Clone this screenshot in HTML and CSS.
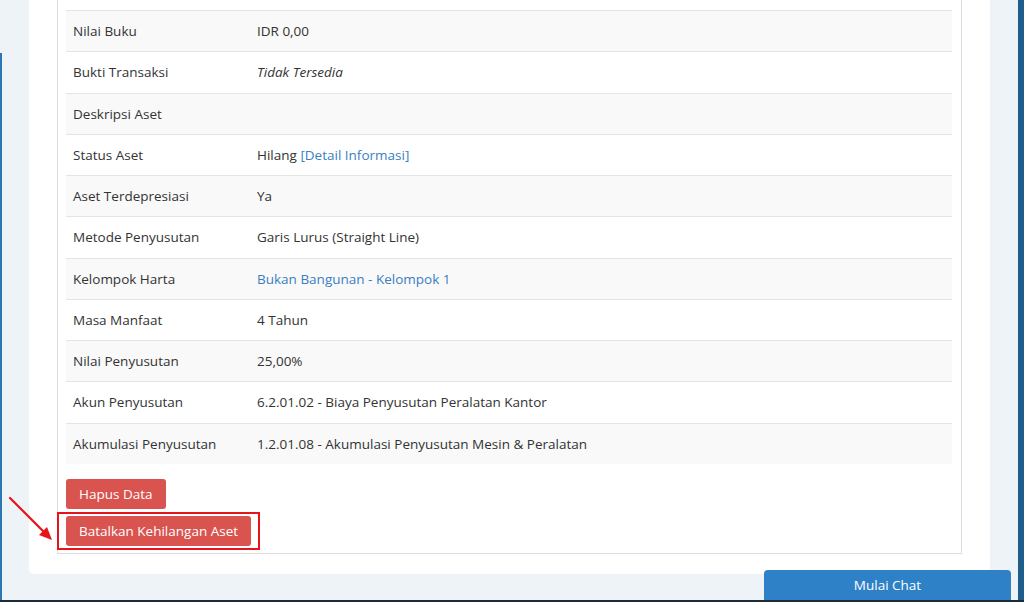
FILE: index.html
```html
<!DOCTYPE html>
<html lang="id">
<head>
<meta charset="utf-8">
<title>Detail Aset</title>
<link rel="stylesheet" href="styles.css">
</head>
<body>
<div class="layout">
  <div class="side-edge"></div>
  <main class="main">
    <section class="card">
      <div class="panel">
        <table class="detail">
          <tr><th>Nilai Buku</th><td>IDR 0,00</td></tr>
          <tr><th>Bukti Transaksi</th><td><em>Tidak Tersedia</em></td></tr>
          <tr><th>Deskripsi Aset</th><td></td></tr>
          <tr><th>Status Aset</th><td>Hilang <a href="#">[Detail Informasi]</a></td></tr>
          <tr><th>Aset Terdepresiasi</th><td>Ya</td></tr>
          <tr><th>Metode Penyusutan</th><td>Garis Lurus (Straight Line)</td></tr>
          <tr><th>Kelompok Harta</th><td><a href="#">Bukan Bangunan - Kelompok 1</a></td></tr>
          <tr><th>Masa Manfaat</th><td>4 Tahun</td></tr>
          <tr><th>Nilai Penyusutan</th><td>25,00%</td></tr>
          <tr><th>Akun Penyusutan</th><td>6.2.01.02 - Biaya Penyusutan Peralatan Kantor</td></tr>
          <tr><th>Akumulasi Penyusutan</th><td>1.2.01.08 - Akumulasi Penyusutan Mesin &amp; Peralatan</td></tr>
        </table>
        <div class="actions">
          <button class="btn btn-danger" type="button">Hapus Data</button>
          <span class="highlight">
            <button class="btn btn-danger" type="button">Batalkan Kehilangan Aset</button>
          </span>
        </div>
      </div>
    </section>
  </main>
  <div class="right-strip"></div>
</div>
<svg class="arrow" width="60" height="60" viewBox="0 0 60 60" aria-hidden="true">
  <line x1="2" y1="2" x2="38" y2="38" stroke="#e8141b" stroke-width="2.2" stroke-linecap="round"/>
  <polygon points="44,44 31,39 39,31" fill="#e8141b"/>
</svg>
<button class="chat-btn" type="button">Mulai Chat</button>
<div class="bottom-edge"></div>
</body>
</html>
```

FILE: styles.css
```css
html, body {
  margin: 0;
  padding: 0;
  height: 602px;
  overflow: hidden;
}
body {
  background: #eef3f8;
  font-family: "Open Sans", "Liberation Sans", sans-serif;
  font-size: 13.5px;
  color: #333;
}
.layout {
  display: flex;
  height: 602px;
}
.side-edge {
  width: 2px;
  margin-top: 53px;
  background: #2b77b8;
}
.main {
  flex: 1;
  padding: 0 28px 0 27px;
}
.right-strip {
  width: 6px;
  background: #1f5d8c;
}
.card {
  background: #fff;
  border-radius: 0 0 5px 5px;
  padding: 0 28px 20px 28px;
}
.panel {
  border: 1px solid #dddddd;
  border-top: none;
  padding: 10px 9px 7px 8px;
}
.detail {
  width: 100%;
  border-collapse: collapse;
}
.detail th, .detail td {
  text-align: left;
  font-weight: normal;
  padding: 10px 8px;
  line-height: 20.27px;
  border-top: 1px solid #e4e4e4;
  vertical-align: middle;
}
.detail th {
  width: 168px;
  padding-left: 7px;
}
.detail tr:nth-child(odd) {
  background: #f9f9f9;
}
.detail a {
  color: #3a7fc1;
  text-decoration: none;
}
.actions {
  display: flex;
  flex-direction: column;
  align-items: flex-start;
  gap: 7px;
  padding-top: 15px;
}
.btn {
  font-family: inherit;
  font-size: 13.5px;
  color: #fff;
  border: none;
  border-radius: 3px;
  height: 30px;
  padding: 0 13px;
  line-height: 30px;
  cursor: pointer;
}
.btn-danger {
  background: #d9534f;
}
.highlight {
  position: relative;
  display: inline-block;
}
.highlight .btn {
  display: block;
}
.highlight::after {
  content: "";
  position: absolute;
  left: -9px;
  right: -9px;
  top: -4px;
  bottom: -4px;
  border: 2px solid #e8141b;
  pointer-events: none;
}
.arrow {
  position: absolute;
  left: 8px;
  top: 496px;
}
.chat-btn {
  position: fixed;
  right: 13px;
  bottom: 0;
  width: 247px;
  height: 32px;
  background: #2e80c7;
  color: #fff;
  border: none;
  border-radius: 4px 4px 0 0;
  font-family: inherit;
  font-size: 13.5px;
  padding: 0 0 2px;
}
.bottom-edge {
  position: fixed;
  left: 0;
  right: 0;
  bottom: 0;
  height: 2px;
  background: #1e2a35;
}
```
